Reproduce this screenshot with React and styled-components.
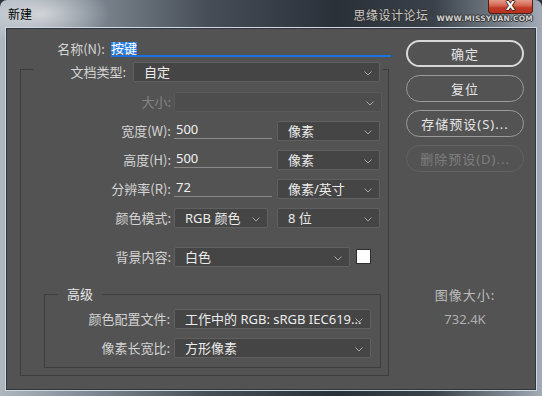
import styled, { createGlobalStyle } from "styled-components";

const GlobalStyle = createGlobalStyle`
  html, body {
    margin: 0;
    padding: 0;
    background: #2b3139;
    overflow: hidden;
  }
  body {
    font-family: "Noto Sans", "Noto Sans CJK SC", sans-serif;
    font-size: 13px;
  }
`;

const Window = styled.div`
  position: relative;
  width: 542px;
  height: 396px;
  display: flex;
  flex-direction: column;
  border-radius: 7px 7px 0 0;
  background:
    radial-gradient(ellipse 70px 30px at 40px 14px, rgba(255, 255, 255, 0.55), transparent),
    linear-gradient(90deg, #aeb6c0 0%, #7c858f 18%, #474e57 38%, #2a3038 62%, #3a414a 80%, #7a838d 93%, #a3acb6 100%);
`;

const TitleBar = styled.div`
  height: 29px;
  flex-shrink: 0;
  display: flex;
  align-items: flex-start;
  padding: 0 9px 0 8px;
  box-sizing: border-box;
`;

const Title = styled.span`
  margin-top: 6px;
  font-family: "Noto Sans CJK SC", sans-serif;
  font-size: 12px;
  line-height: 16px;
  color: #000;
`;

const Caption = styled.div`
  margin-left: auto;
  display: flex;
  align-items: flex-start;
  gap: 6px;
`;

const MarkCn = styled.span`
  margin-top: 6px;
  font-family: "Noto Sans CJK SC", sans-serif;
  font-size: 12px;
  line-height: 18px;
  letter-spacing: 0.5px;
  color: #c9c9c9;
  text-shadow: 1px 0 0 #333, -1px 0 0 #333, 0 1px 0 #333, 0 -1px 0 #333;
`;

const CloseCol = styled.div`
  margin-left: 2px;
  display: flex;
  flex-direction: column;
  align-items: flex-end;
`;

const CloseBtn = styled.div`
  width: 45px;
  height: 14px;
  box-sizing: border-box;
  border: 1px solid #4d2219;
  border-top-width: 0;
  border-radius: 0 0 4px 4px;
  background-color: #c7412d;
  background-image: linear-gradient(180deg, #e59a8a 0%, #d36b56 40%, #c13a28 60%, #b9321f 100%);
  color: #fff;
  font: bold 12px/13px "DejaVu Sans", sans-serif;
  text-align: center;
  text-shadow: 1px 0 0 #3a1a14, -1px 0 0 #3a1a14, 0 1px 0 #3a1a14, 0 -1px 0 #3a1a14;
`;

const MarkEn = styled.span`
  font-family: "DejaVu Sans", sans-serif;
  font-weight: bold;
  font-size: 7.5px;
  line-height: 9px;
  letter-spacing: 0.2px;
  white-space: nowrap;
  color: #d4d4d4;
  text-shadow: 1px 0 0 #333, -1px 0 0 #333, 0 1px 0 #333, 0 -1px 0 #333;
`;

const Panel = styled.div`
  flex: 1;
  margin: 0 7px 7px;
  background: #535353;
  box-shadow: 0 0 0 1px #30363d, 0 0 0 2px #cfd7df;
  display: flex;
  padding: 11px 0 0 13px;
  box-sizing: border-box;
  color: #d6d6d6;
`;

const LeftCol = styled.div`
  width: 371px;
  display: flex;
  flex-direction: column;
`;

const RightCol = styled.div`
  margin-left: 15px;
  width: 118px;
  display: flex;
  flex-direction: column;
  gap: 8px;
`;

const NameRow = styled.div`
  display: flex;
  align-items: center;
  height: 17px;
`;

const Label = styled.span`
  width: ${(p) => p.$w}px;
  margin-right: ${(p) => p.$gap ?? 3}px;
  flex: ${(p) => (p.$grow ? 1 : "none")};
  text-align: right;
  white-space: nowrap;
  line-height: 16px;
  font-family: "Noto Sans CJK SC", sans-serif;
  color: ${(p) => (p.$disabled ? "#858585" : "#d4d4d4")};
`;

const NameField = styled.div`
  flex: 1;
  height: 17px;
  box-sizing: border-box;
  border-bottom: 2px solid #1b73e2;
  display: flex;
  align-items: flex-start;
  padding-top: 2px;
`;

const Selected = styled.span`
  background: #2b7fe9;
  color: #fff;
  line-height: 12px;
  height: 12px;
  font-family: "Noto Sans CJK SC", sans-serif;
`;

const OuterBox = styled.div`
  margin-top: 12px;
  width: 369px;
  box-sizing: border-box;
  border: 1px solid #3d3d3d;
  padding-bottom: 7px;
  display: flex;
  flex-direction: column;
`;

const DocTypeRow = styled.div`
  margin: -8px 5px 0 12px;
  background: #535353;
  display: flex;
  align-items: center;
  padding-right: 3px;
`;

const Row = styled.div`
  display: flex;
  align-items: flex-start;
  margin-top: ${(p) => p.$mt}px;
  padding-right: ${(p) => p.$pr ?? 7}px;

  & > ${Label} {
    align-self: center;
  }
`;

const SelectBox = styled.div`
  position: relative;
  height: 20px;
  box-sizing: border-box;
  width: ${(p) => (p.$w ? `${p.$w}px` : "auto")};
  flex: ${(p) => (p.$w ? "none" : 1)};
  margin-left: ${(p) => p.$ml ?? 0}px;
  background: ${(p) => (p.$disabled ? "#4d4d4d" : "#454545")};
  border: 1px solid ${(p) => (p.$disabled ? "#5a5a5a" : "#606060")};
  border-radius: 2px;
  display: flex;
  align-items: center;
  padding: 0 20px 0 10px;
  color: #ececec;
  white-space: nowrap;
  overflow: hidden;
  line-height: 16px;
  font-family: "Noto Sans", "Noto Sans CJK SC", sans-serif;

  svg {
    position: absolute;
    right: 7px;
    top: 8px;
  }
`;

const NumberField = styled.div`
  width: 98px;
  height: 18px;
  box-sizing: border-box;
  border-bottom: 1px solid #8a8a8a;
  padding-left: 2px;
  line-height: 17px;
  color: #f2f2f2;
`;

const Swatch = styled.div`
  width: 15px;
  height: 15px;
  margin: 2px 0 0 6px;
  box-sizing: border-box;
  background: #fff;
  border: 1px solid #2e2e2e;
`;

const Advanced = styled.fieldset`
  margin: 19px 7px 0 23px;
  padding: 0 9px 9px 0;
  border: 1px solid #3d3d3d;
  min-width: 0;
`;

const Legend = styled.legend`
  margin-left: 13px;
  padding: 0 9px;
  line-height: 16px;
  color: #e6e6e6;
  font-family: "Noto Sans CJK SC", sans-serif;
`;

const Button = styled.div`
  height: 27px;
  box-sizing: border-box;
  border-radius: 14px;
  border: ${(p) =>
    p.$primary ? "2px solid #d8d8d8" : `1px solid ${p.$disabled ? "#626262" : "#9a9a9a"}`};
  display: flex;
  align-items: center;
  justify-content: center;
  color: ${(p) => (p.$disabled ? "#7e7e7e" : "#e4e4e4")};
  letter-spacing: 1px;
  font-family: "Noto Sans", "Noto Sans CJK SC", sans-serif;
`;

const SizeInfo = styled.div`
  margin-top: 107px;
  display: flex;
  flex-direction: column;
  align-items: center;
  gap: 8px;
  line-height: 16px;
`;

const SizeLabel = styled.span`
  color: #bdbdbd;
  font-family: "Noto Sans CJK SC", sans-serif;
  letter-spacing: 1px;
`;

const SizeValue = styled.span`
  color: #b0b0b0;
`;

function Caret() {
  return (
    <svg width="8" height="5" viewBox="0 0 8 5">
      <polyline points="0.5,0.5 4,4 7.5,0.5" fill="none" stroke="#a8a8a8" strokeWidth="1" />
    </svg>
  );
}

function Select({ children, ...rest }) {
  return (
    <SelectBox {...rest}>
      {children}
      <Caret />
    </SelectBox>
  );
}

export default function App() {
  return (
    <>
      <GlobalStyle />
      <Window>
        <TitleBar>
          <Title>新建</Title>
          <Caption>
            <MarkCn>思缘设计论坛</MarkCn>
            <CloseCol>
              <CloseBtn>X</CloseBtn>
              <MarkEn>WWW.MISSYUAN.COM</MarkEn>
            </CloseCol>
          </Caption>
        </TitleBar>

        <Panel>
          <LeftCol>
            <NameRow>
              <Label $w={85} $gap={6}>名称(N):</Label>
              <NameField>
                <Selected>按键</Selected>
              </NameField>
            </NameRow>

            <OuterBox>
              <DocTypeRow>
                <Label $w={92} $gap={7} $grow>文档类型:</Label>
                <Select $w={247}>自定</Select>
              </DocTypeRow>

              <Row $mt={10} $pr={6}>
                <Label $w={150} $disabled>大小:</Label>
                <Select $disabled />
              </Row>

              <Row $mt={9}>
                <Label $w={150}>宽度(W):</Label>
                <NumberField>500</NumberField>
                <Select $w={103} $ml={5}>像素</Select>
              </Row>

              <Row $mt={9}>
                <Label $w={150}>高度(H):</Label>
                <NumberField>500</NumberField>
                <Select $w={103} $ml={5}>像素</Select>
              </Row>

              <Row $mt={9}>
                <Label $w={150}>分辨率(R):</Label>
                <NumberField>72</NumberField>
                <Select $w={103} $ml={5}>像素/英寸</Select>
              </Row>

              <Row $mt={9}>
                <Label $w={150}>颜色模式:</Label>
                <Select $w={94}>RGB 颜色</Select>
                <Select $w={103} $ml={9}>8 位</Select>
              </Row>

              <Row $mt={19} $pr={16}>
                <Label $w={150}>背景内容:</Label>
                <Select $w={176}>白色</Select>
                <Swatch />
              </Row>

              <Advanced>
                <Legend>高级</Legend>
                <Row $mt={7} $pr={0}>
                  <Label $w={125} $gap={4}>颜色配置文件:</Label>
                  <Select>工作中的 RGB: sRGB IEC619...</Select>
                </Row>
                <Row $mt={9} $pr={0}>
                  <Label $w={125} $gap={4}>像素长宽比:</Label>
                  <Select>方形像素</Select>
                </Row>
              </Advanced>
            </OuterBox>
          </LeftCol>

          <RightCol>
            <Button $primary>确定</Button>
            <Button>复位</Button>
            <Button>存储预设(S)...</Button>
            <Button $disabled>删除预设(D)...</Button>
            <SizeInfo>
              <SizeLabel>图像大小:</SizeLabel>
              <SizeValue>732.4K</SizeValue>
            </SizeInfo>
          </RightCol>
        </Panel>
      </Window>
    </>
  );
}
